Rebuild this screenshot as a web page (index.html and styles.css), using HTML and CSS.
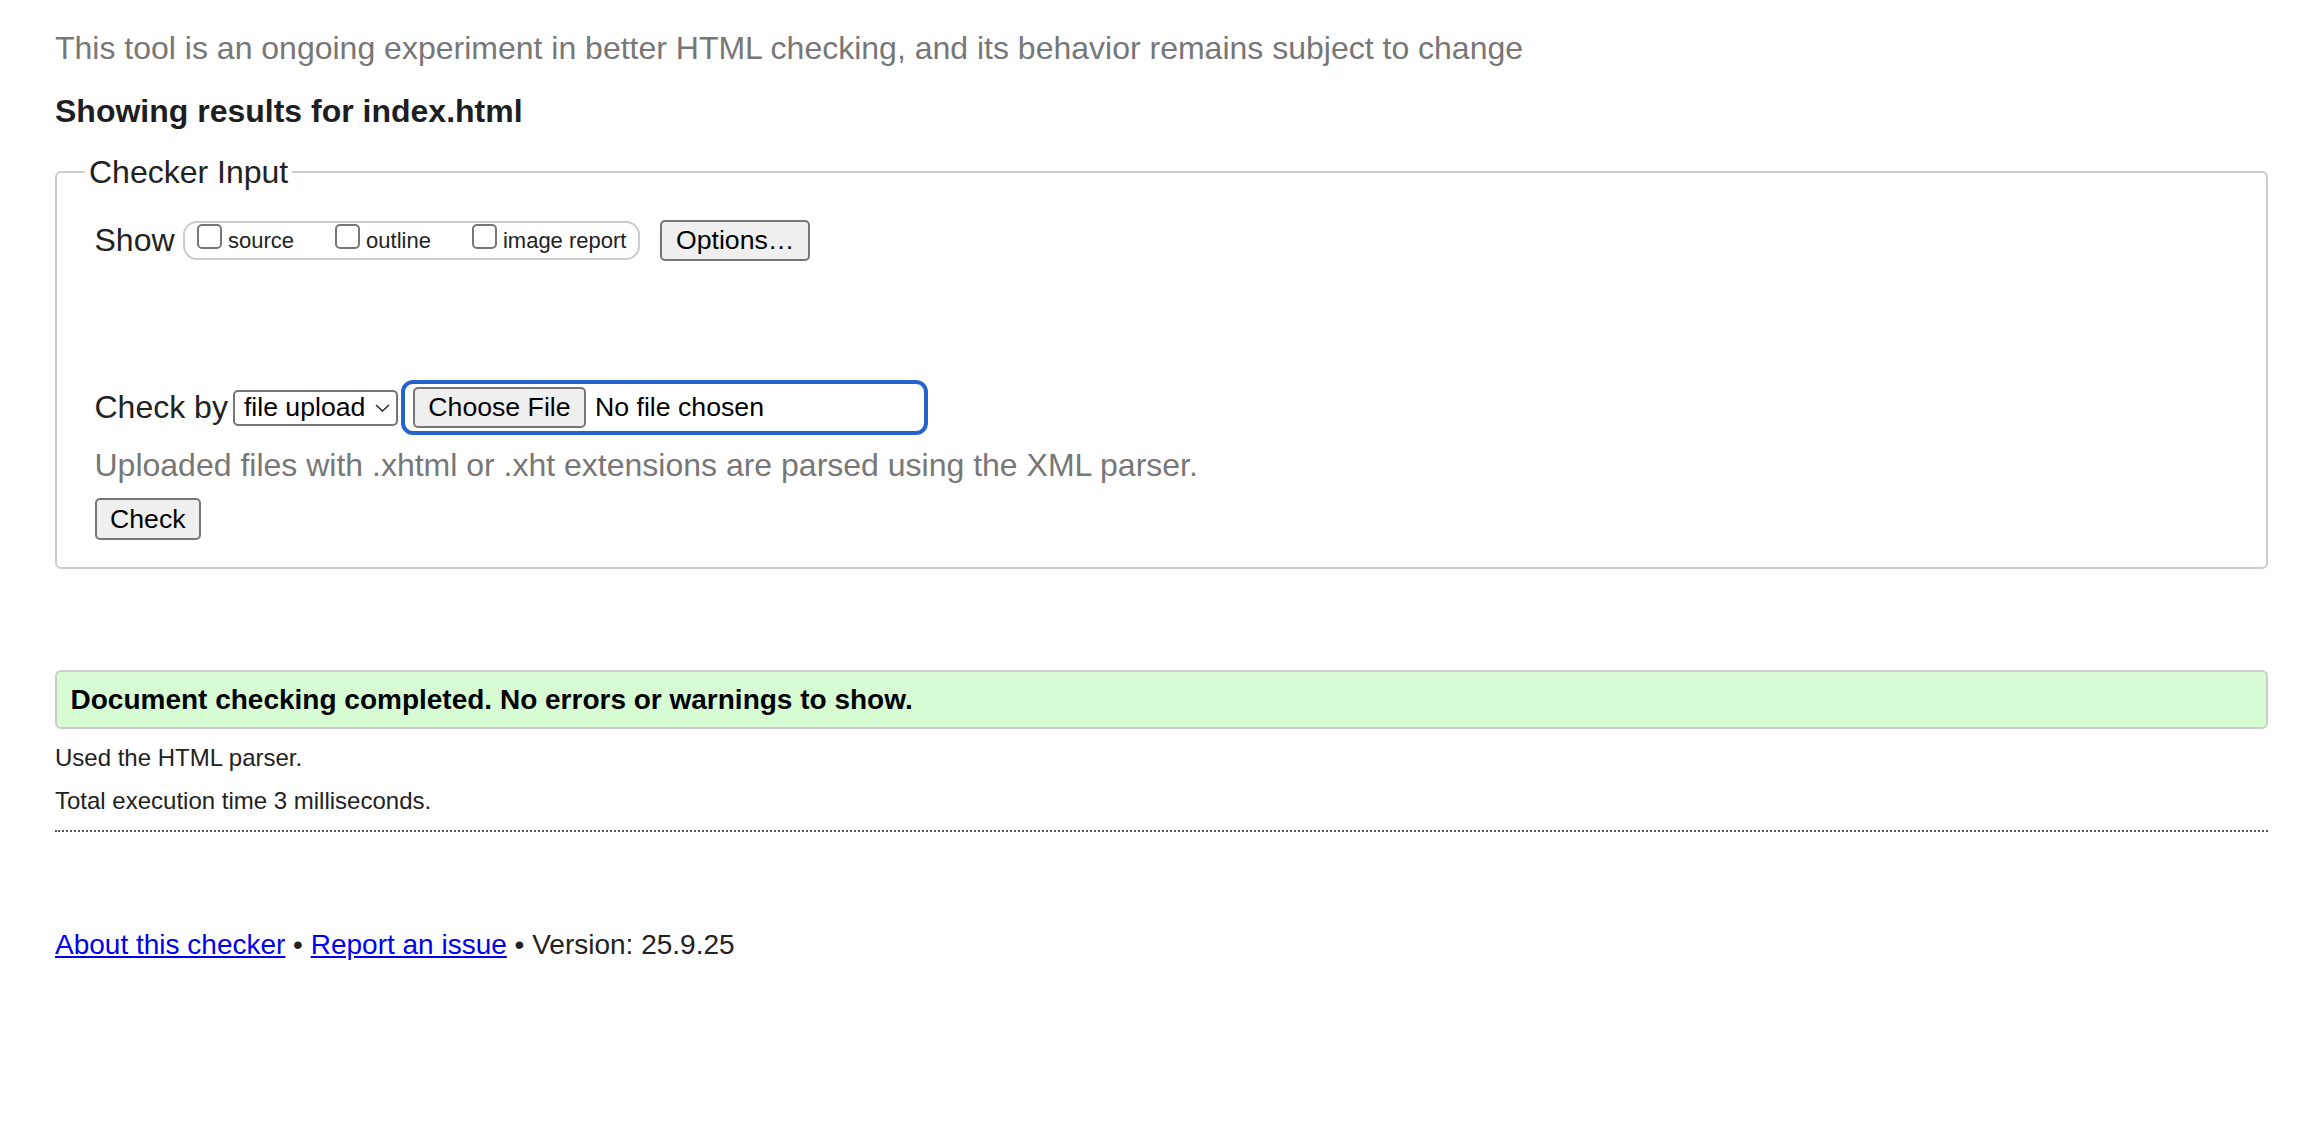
FILE: index.html
```html
<!DOCTYPE html>
<html lang="en">
<head>
<meta charset="utf-8">
<title>Nu Html Checker</title>
<link rel="stylesheet" href="styles.css">
</head>
<body>
<p class="experimental">This tool is an ongoing experiment in better HTML checking, and its behavior remains subject to change</p>
<h2 class="results-title">Showing results for index.html</h2>
<form class="checker-form">
  <fieldset class="checker-input">
    <legend>Checker Input</legend>
    <div class="show-row">
      <span class="row-label">Show</span>
      <span class="show-options">
        <label class="opt"><input type="checkbox" class="cb">source</label>
        <label class="opt"><input type="checkbox" class="cb">outline</label>
        <label class="opt"><input type="checkbox" class="cb">image report</label>
      </span>
      <button type="button" class="btn btn-options">Options…</button>
    </div>
    <div class="checkby-row">
      <span class="row-label">Check by</span>
      <span class="select">file upload<svg class="chev" width="15" height="8" viewBox="0 0 15 8"><polyline points="1,1 7.5,7 14,1" fill="none" stroke="#222" stroke-width="1.4"/></svg></span>
      <span class="file-input"><button type="button" class="btn">Choose File</button><span class="file-status">No file chosen</span></span>
    </div>
    <p class="note">Uploaded files with .xhtml or .xht extensions are parsed using the XML parser.</p>
    <button type="submit" class="btn btn-check">Check</button>
  </fieldset>
</form>
<div class="success">Document checking completed. No errors or warnings to show.</div>
<p class="details">Used the HTML parser.</p>
<p class="details">Total execution time 3 milliseconds.</p>
<hr class="divider">
<p class="footer"><a href="#">About this checker</a> • <a href="#">Report an issue</a> • Version: 25.9.25</p>
</body>
</html>
```

FILE: styles.css
```css
html, body {
  margin: 0;
  padding: 0;
  background: #fff;
}

body {
  font-family: "Liberation Sans", Arial, sans-serif;
  color: #222;
  padding: 0 44px 0 55px;
}

.experimental {
  margin: 30px 0 0;
  font-size: 32px;
  line-height: 37px;
  color: #777;
}

.results-title {
  margin: 26px 0 0;
  font-size: 32px;
  line-height: 37px;
  font-weight: bold;
  color: #1e1e22;
}

.checker-form {
  margin: 23.5px 0 0;
}

.checker-input {
  margin: 0;
  padding: 29.5px 20px 27px 37.5px;
  border: 2px solid #ccc;
  border-radius: 6px;
  min-width: 0;
}

.checker-input legend {
  margin-left: -9.5px;
  padding: 0 4px;
  font-size: 32px;
  line-height: 37px;
}

.show-row {
  display: flex;
  align-items: center;
  height: 41px;
}

.row-label {
  font-size: 32px;
  line-height: 37px;
  white-space: nowrap;
}

.show-row .row-label {
  margin-right: 8.5px;
}

.show-options {
  display: flex;
  gap: 41px;
  padding: 0 12px;
  border: 2px solid #ccc;
  border-radius: 14px;
}

.opt {
  display: block;
  font-size: 22px;
  line-height: 34.8px;
  white-space: nowrap;
}

.cb {
  appearance: none;
  -webkit-appearance: none;
  display: inline-block;
  box-sizing: border-box;
  width: 25px;
  height: 25px;
  margin: 0 6px 0 0;
  border: 2px solid #767676;
  border-radius: 5px;
  background: #fff;
  vertical-align: baseline;
  position: relative;
  top: 1px;
}

.btn {
  font-family: inherit;
  font-size: 26.67px;
  line-height: 1;
  height: 41px;
  padding: 0 13.5px;
  box-sizing: border-box;
  border: 2px solid #767676;
  border-radius: 5px;
  background: #efefef;
  color: #000;
  white-space: nowrap;
}

.btn-options {
  margin-left: 20px;
}

.checkby-row {
  display: flex;
  align-items: center;
  height: 55px;
  margin-top: 119px;
}

.checkby-row .row-label {
  margin-right: 5px;
}

.select {
  display: inline-flex;
  align-items: center;
  box-sizing: border-box;
  height: 36px;
  padding: 0 6px 0 9px;
  border: 2px solid #767676;
  border-radius: 5px;
  font-size: 26.67px;
  color: #000;
  white-space: nowrap;
}

.chev {
  margin-left: 9.4px;
}

.file-input {
  display: inline-flex;
  align-items: center;
  box-sizing: border-box;
  width: 527px;
  height: 55px;
  margin-left: 3px;
  padding: 0 8px;
  border: 4px solid #2463cb;
  border-radius: 12px;
}

.file-status {
  margin-left: 9px;
  font-size: 26.67px;
  color: #000;
  white-space: nowrap;
}

.note {
  margin: 12px 0 0;
  font-size: 32px;
  line-height: 37px;
  color: #777;
}

.btn-check {
  display: block;
  margin-top: 14px;
  height: 42px;
}

.success {
  margin-top: 101px;
  padding: 11px 12px 11px 13.5px;
  border: 2px solid #ccc;
  border-radius: 6px;
  background: #d7fcd3;
  font-size: 28px;
  line-height: 33px;
  font-weight: bold;
  color: #000;
}

.details {
  margin: 14.7px 0 0;
  font-size: 24px;
  line-height: 28px;
}

.details + .details {
  margin-top: 15px;
}

.divider {
  margin: 15.3px 0 0;
  height: 0;
  border: 0;
  border-top: 2px dotted #555;
}

.footer {
  margin: 97.3px 0 0;
  font-size: 28px;
  line-height: 32px;
}

.footer a {
  color: #0000ee;
}
```
